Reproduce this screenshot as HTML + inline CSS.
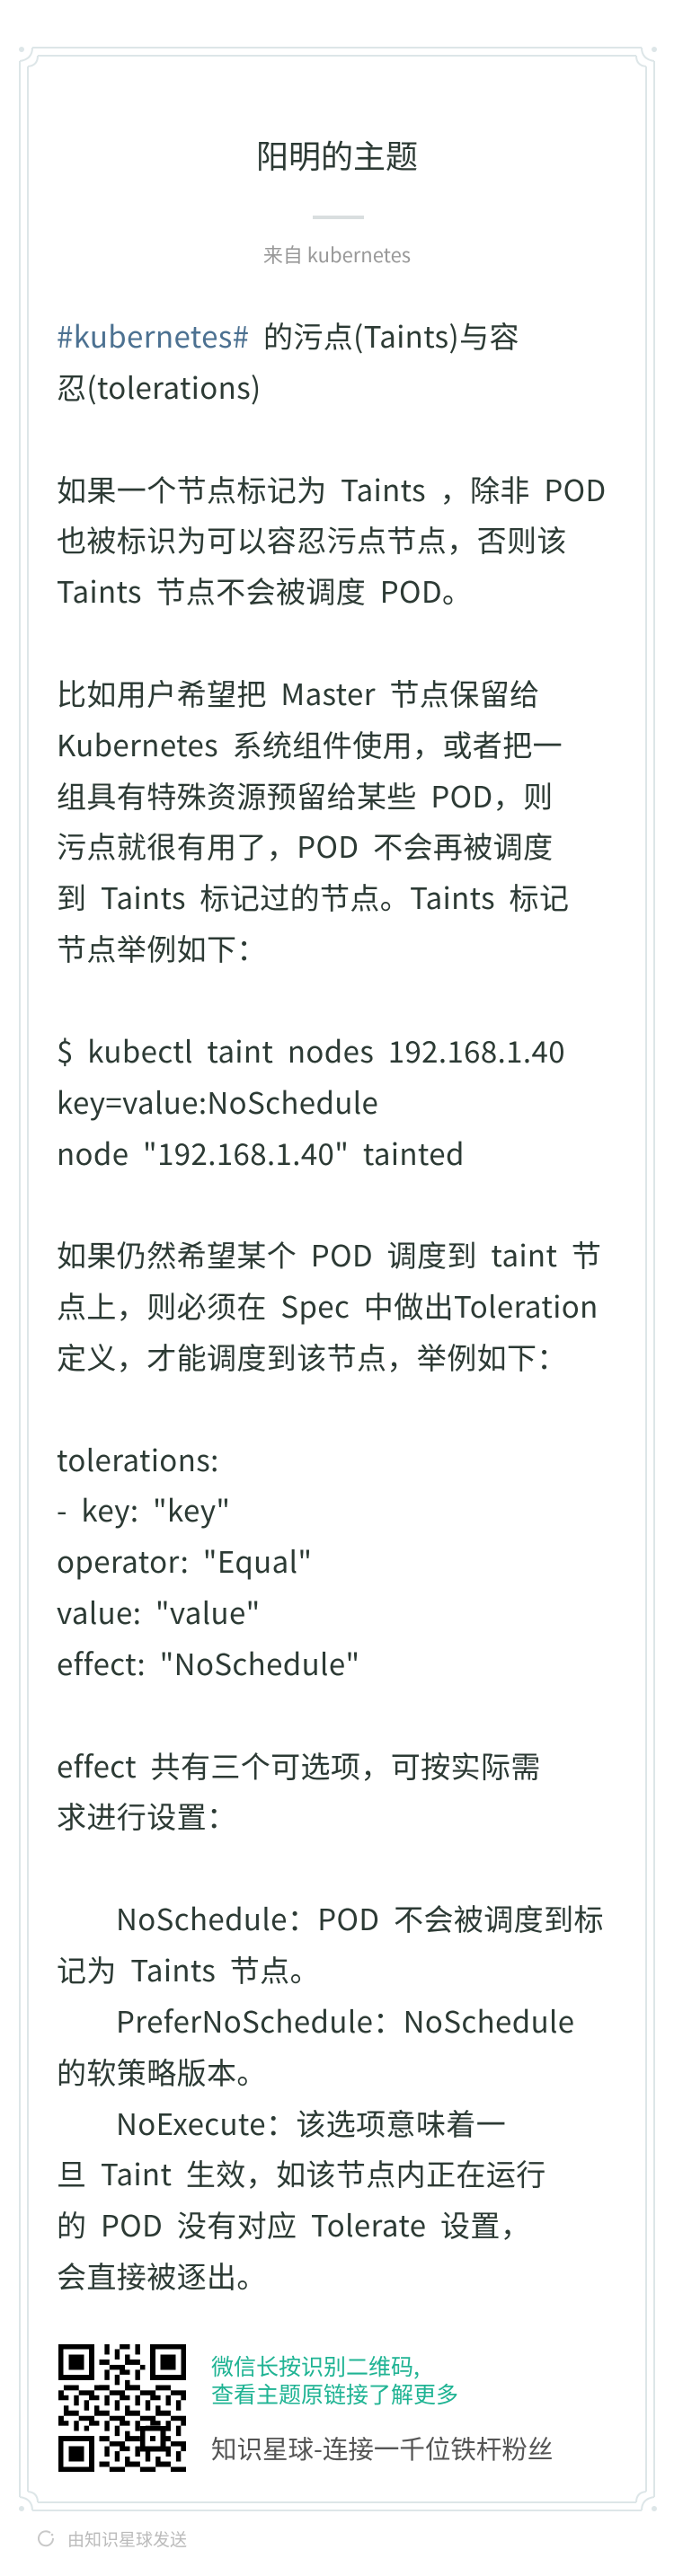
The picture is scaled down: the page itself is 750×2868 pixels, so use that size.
<!DOCTYPE html>
<html><head><meta charset="utf-8">
<style>
html,body{margin:0;padding:0;background:#fff;}
body{width:750px;height:2868px;position:relative;overflow:hidden;font-family:"Noto Sans CJK SC","Liberation Sans",sans-serif;}
.frame{position:absolute;}
.title{position:absolute;left:0;width:750px;top:147px;text-align:center;font-size:36px;color:#2c3a34;line-height:50px;}
.div{position:absolute;left:348px;top:240px;width:57px;height:4px;background:#d9dedf;}
.sub{position:absolute;left:0;width:750px;top:267px;text-align:center;font-size:22px;color:#999;line-height:32px;}
.body{position:absolute;left:63px;top:345px;font-size:33px;letter-spacing:0.4px;line-height:56.85px;color:#2c3a34;}
.body div{height:56.85px;white-space:pre;}
.tag{color:#4c7191;}
.ind{padding-left:66px;}
.g{position:absolute;left:235px;font-size:25px;color:#1fb393;line-height:30px;white-space:pre;}
.k{position:absolute;left:235px;top:2708px;font-size:28.5px;color:#555;line-height:36px;}
.foot{position:absolute;left:75px;top:2813px;font-size:19px;color:#bbb;line-height:28px;}
</style></head><body>
<svg class="frame" style="left:0;top:0" width="750" height="2868">
<g fill="none" stroke="#dde6e8" stroke-width="2">
<path d="M36 53 H714 M22 68 V2780 M728 68 V2780 M36 2795 H714"/>
<path d="M36 53 Q36 66 22 68 M714 53 Q714 66 728 68 M36 2795 Q36 2782 22 2780 M714 2795 Q714 2782 728 2780"/>
<path d="M42 62 H708 M31 74 V2774 M719 74 V2774 M42 2786 H708"/>
<path d="M42 62 Q42 73 31 74 M708 62 Q708 73 719 74 M42 2786 Q42 2775 31 2774 M708 2786 Q708 2775 719 2774"/>
</g>
<g fill="#dde6e8"><circle cx="24" cy="55" r="3"/><circle cx="728" cy="55" r="3"/><circle cx="24" cy="2793" r="3"/><circle cx="728" cy="2793" r="3"/></g>
</svg>
<div class="title">阳明的主题</div>
<div class="div"></div>
<div class="sub">来自 kubernetes</div>
<div class="body"><div><span class="tag">#kubernetes#</span>  的污点(Taints)与容</div><div>忍(tolerations)</div><div></div><div>如果一个节点标记为  Taints  ，除非  POD</div><div>也被标识为可以容忍污点节点，否则该</div><div>Taints  节点不会被调度  POD。</div><div></div><div>比如用户希望把  Master  节点保留给</div><div>Kubernetes  系统组件使用，或者把一</div><div>组具有特殊资源预留给某些  POD，则</div><div>污点就很有用了，POD  不会再被调度</div><div>到  Taints  标记过的节点。Taints  标记</div><div>节点举例如下：</div><div></div><div>$  kubectl  taint  nodes  192.168.1.40</div><div>key=value:NoSchedule</div><div>node  "192.168.1.40"  tainted</div><div></div><div>如果仍然希望某个  POD  调度到  taint  节</div><div>点上，则必须在  Spec  中做出Toleration</div><div>定义，才能调度到该节点，举例如下：</div><div></div><div>tolerations:</div><div>-  key:  "key"</div><div>operator:  "Equal"</div><div>value:  "value"</div><div>effect:  "NoSchedule"</div><div></div><div>effect  共有三个可选项，可按实际需</div><div>求进行设置：</div><div></div><div class="ind">NoSchedule：POD  不会被调度到标</div><div>记为  Taints  节点。</div><div class="ind">PreferNoSchedule：NoSchedule</div><div>的软策略版本。</div><div class="ind">NoExecute：该选项意味着一</div><div>旦  Taint  生效，如该节点内正在运行</div><div>的  POD  没有对应  Tolerate  设置，</div><div>会直接被逐出。</div></div>
<svg style="position:absolute;left:65px;top:2610px" width="142" height="142" viewBox="0 0 25 25" shape-rendering="crispEdges">
<defs><pattern id="p" width="6" height="5" patternUnits="userSpaceOnUse">
<rect x="0" y="0" width="2" height="1"/><rect x="3" y="0" width="1" height="2"/><rect x="5" y="1" width="1" height="2"/><rect x="1" y="2" width="1" height="2"/><rect x="2" y="3" width="2" height="1"/><rect x="4" y="4" width="2" height="1"/><rect x="0" y="4" width="1" height="1"/></pattern></defs>
<rect x="8" y="0" width="9" height="8" fill="url(#p)"/>
<rect x="0" y="8" width="25" height="9" fill="url(#p)"/>
<rect x="8" y="17" width="17" height="8" fill="url(#p)"/>
<g fill="#000">
<rect x="0" y="0" width="7" height="7"/><rect x="18" y="0" width="7" height="7"/><rect x="0" y="18" width="7" height="7"/>
</g>
<g fill="#fff"><rect x="1" y="1" width="5" height="5"/><rect x="19" y="1" width="5" height="5"/><rect x="1" y="19" width="5" height="5"/></g>
<g fill="#000"><rect x="2" y="2" width="3" height="3"/><rect x="20" y="2" width="3" height="3"/><rect x="2" y="20" width="3" height="3"/><rect x="16" y="16" width="5" height="5"/></g>
<rect x="17" y="17" width="3" height="3" fill="#fff"/><rect x="18" y="18" width="1" height="1"/>
</svg>
<div class="g" style="top:2619px">微信长按识别二维码,</div>
<div class="g" style="top:2650px">查看主题原链接了解更多</div>
<div class="k">知识星球-连接一千位铁杆粉丝</div>
<svg style="position:absolute;left:42px;top:2817px" width="20" height="20"><path d="M14 3 A8 8 0 1 0 17 9" fill="none" stroke="#c8c8c8" stroke-width="2"/><circle cx="16" cy="5" r="1.3" fill="#c8c8c8"/></svg>
<div class="foot">由知识星球发送</div>
</body></html>
